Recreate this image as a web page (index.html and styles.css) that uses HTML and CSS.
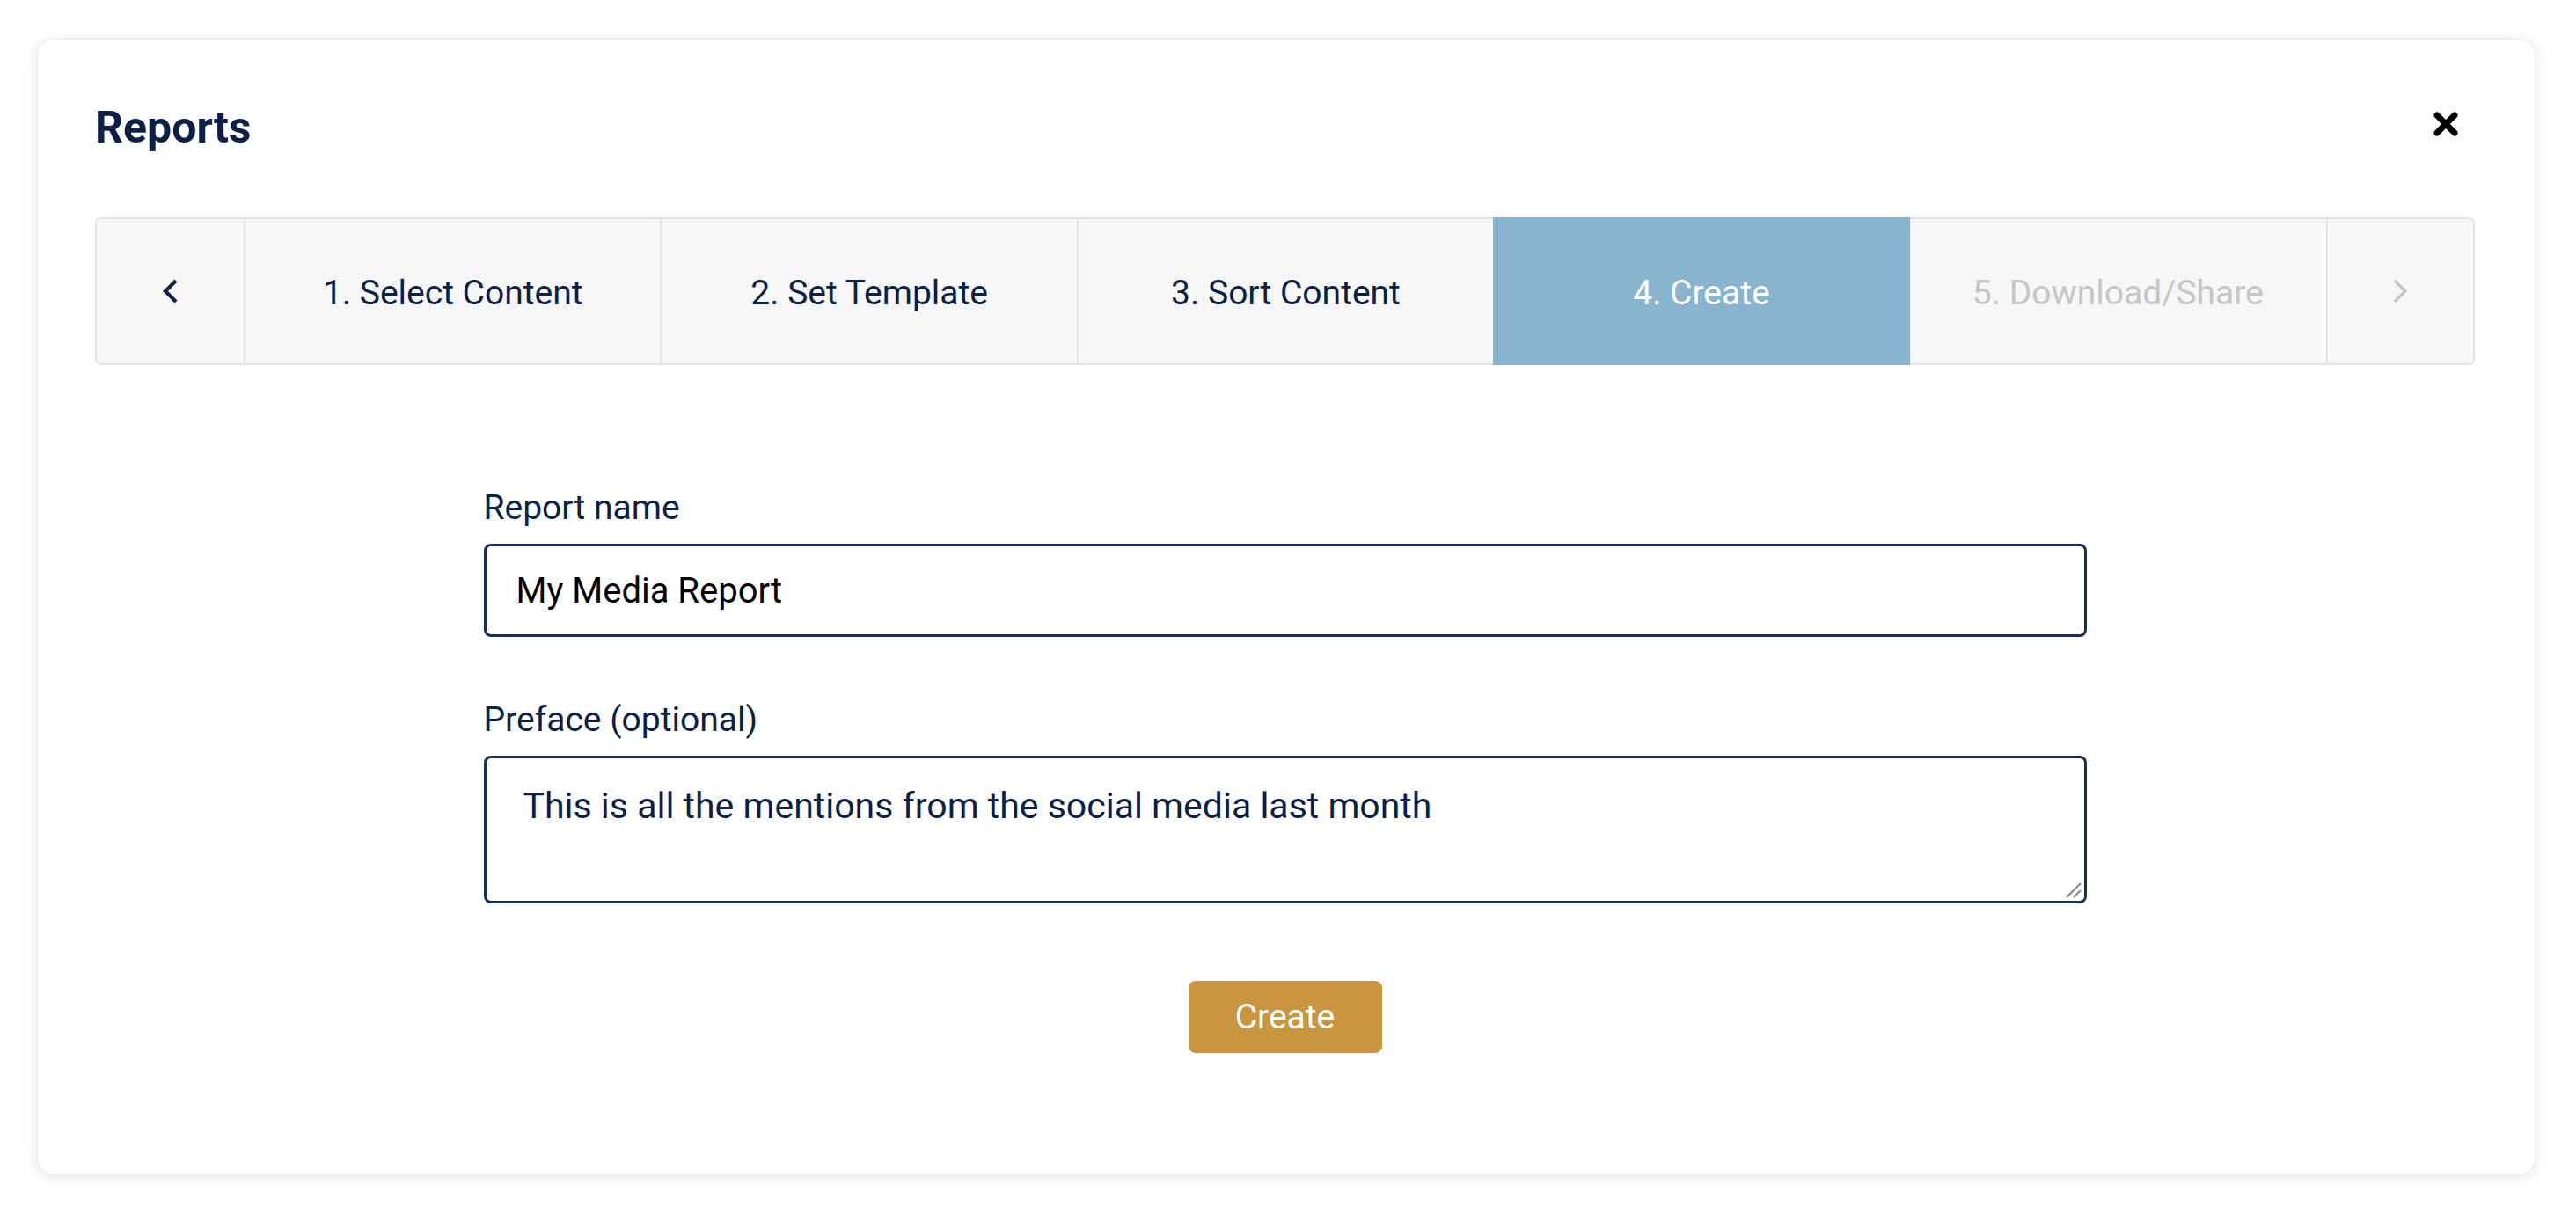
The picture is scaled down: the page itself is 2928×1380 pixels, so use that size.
FILE: index.html
```html
<!DOCTYPE html>
<html lang="en">
<head>
<meta charset="utf-8">
<title>Reports</title>
<link rel="stylesheet" href="styles.css">
</head>
<body>
<div class="modal">
  <div class="modal-header">
    <h1 class="modal-title">Reports</h1>
    <button class="close-btn" aria-label="Close">
      <svg width="28" height="28" viewBox="0 0 28 28"><path d="M4 4 L24 24 M24 4 L4 24" stroke="#000" stroke-width="7" stroke-linecap="round"/></svg>
    </button>
  </div>

  <div class="steps">
    <div class="step arrow">
      <svg width="18" height="28" viewBox="0 0 18 28"><polyline points="15,2 3,14 15,26" fill="none" stroke="#0c1f45" stroke-width="4.2" stroke-linejoin="miter"/></svg>
    </div>
    <div class="step">1. Select Content</div>
    <div class="step">2. Set Template</div>
    <div class="step">3. Sort Content</div>
    <div class="step active">4. Create</div>
    <div class="step disabled">5. Download/Share</div>
    <div class="step arrow">
      <svg width="18" height="28" viewBox="0 0 18 28"><polyline points="3,2 15,14 3,26" fill="none" stroke="#c6c6c6" stroke-width="3.2"/></svg>
    </div>
  </div>

  <div class="form">
    <label class="field-label">Report name</label>
    <div class="text-input">My Media Report</div>

    <label class="field-label second">Preface (optional)</label>
    <div class="area-wrap">
      <textarea class="text-area">This is all the mentions from the social media last month</textarea>
      <svg class="grip" width="20" height="20" viewBox="0 0 20 20"><path d="M2 18 L18 2 M10 18 L18 10" stroke="#8a8a8a" stroke-width="2.2"/></svg>
    </div>

    <div class="actions">
      <button class="create-btn">Create</button>
    </div>
  </div>
</div>
</body>
</html>
```

FILE: styles.css
```css
html, body {
  margin: 0;
  padding: 0;
  background: #ffffff;
}

body {
  padding: 45px 47px 45px 43px;
  font-family: Roboto, "Liberation Sans", sans-serif;
  color: #0c1f45;
}

.modal {
  background: #ffffff;
  border-radius: 18px;
  box-shadow: 0 0 4px rgba(0, 0, 0, 0.06), 0 2px 18px rgba(0, 0, 0, 0.10);
  height: 1290px;
  box-sizing: border-box;
  padding: 70px 68px 0 65px;
}

.modal-header {
  display: flex;
  align-items: center;
  justify-content: space-between;
  height: 60px;
}

.modal-title {
  margin: 0;
  font-size: 50px;
  line-height: 60px;
  font-weight: 700;
  color: #0c1f45;
}

.close-btn {
  border: none;
  background: none;
  padding: 0;
  margin-right: 19px;
  margin-top: -8px;
  width: 28px;
  height: 28px;
  display: flex;
}

.steps {
  margin-top: 72px;
  display: grid;
  grid-template-columns: 167px repeat(5, 1fr) 167px;
  height: 168px;
  box-sizing: border-box;
  border: 2px solid #e4e4e4;
  border-radius: 6px;
  background: #f7f7f7;
}

.step {
  display: flex;
  align-items: center;
  justify-content: center;
  padding-top: 4px;
  font-size: 39px;
  color: #0c1f45;
  border-left: 2px solid #e4e4e4;
}

.step.arrow {
  padding-top: 0;
}

.step:first-child {
  border-left: none;
}

.step.active {
  background: #88b4cd;
  color: #ffffff;
  border-left: none;
  margin: -2px 0;
}

.step.active + .step {
  border-left: none;
}

.step.disabled {
  color: #c6c6c6;
}

.form {
  width: 1822px;
  margin: 138px auto 0;
  display: flex;
  flex-direction: column;
}

.field-label {
  font-size: 39px;
  line-height: 48px;
  color: #0c1f45;
}

.field-label.second {
  margin-top: 70px;
}

.text-input {
  margin-top: 17px;
  height: 106px;
  box-sizing: border-box;
  border: 3px solid #1c2e57;
  border-radius: 8px;
  padding: 0 34px;
  display: flex;
  align-items: center;
  font-size: 40px;
  color: #000000;
}

.area-wrap {
  position: relative;
  margin-top: 17px;
  display: flex;
}

.text-area {
  flex: 1;
  height: 168px;
  box-sizing: border-box;
  border: 3px solid #1c2e57;
  border-radius: 8px;
  padding: 30px 42px;
  font-family: Roboto, "Liberation Sans", sans-serif;
  font-size: 41px;
  line-height: 48px;
  color: #0c1f45;
  resize: none;
  outline: none;
  background: #ffffff;
}

.grip {
  position: absolute;
  right: 5px;
  bottom: 5px;
}

.actions {
  display: flex;
  justify-content: center;
  margin-top: 88px;
}

.create-btn {
  width: 220px;
  height: 82px;
  border: none;
  border-radius: 8px;
  background: #c9963f;
  color: #ffffff;
  font-family: Roboto, "Liberation Sans", sans-serif;
  font-size: 39px;
  padding: 0;
}
```
